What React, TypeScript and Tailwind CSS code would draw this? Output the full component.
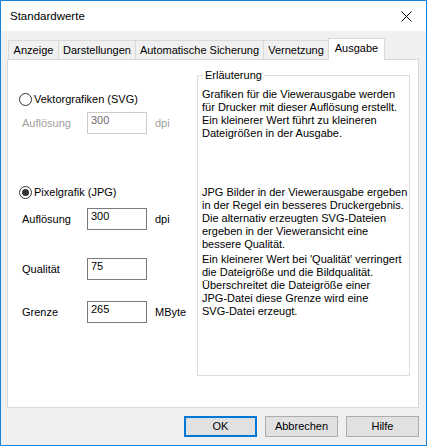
import React from "react";

const font = { fontFamily: '"Liberation Sans", Arial, sans-serif' };

function Radio({ checked }: { checked?: boolean }) {
  return (
    <div className="w-[13px] h-[13px] rounded-full border border-[#333333] bg-white flex items-center justify-center shrink-0">
      {checked && <div className="w-[7px] h-[7px] rounded-full bg-[#333333]" />}
    </div>
  );
}

function Field({
  label,
  value,
  unit,
  disabled,
  className,
}: {
  label: string;
  value: string;
  unit?: string;
  disabled?: boolean;
  className?: string;
}) {
  const txt = disabled ? "text-[#a0a0a0]" : "text-black";
  return (
    <div className={"flex items-center h-[22px] pl-[14px] " + (className || "")}>
      <div className={"w-[65px] leading-[13px] " + txt}>{label}</div>
      <div
        className={
          "w-[60px] h-[22px] border bg-white pl-[3px] pt-[1px] leading-[13px] " +
          (disabled ? "border-[#cccccc] text-[#6d6d6d]" : "border-[#7a7a7a] text-black")
        }
      >
        {value}
      </div>
      {unit && <div className={"ml-[8px] leading-[13px] " + txt}>{unit}</div>}
    </div>
  );
}

const tabs = [
  { label: "Anzeige", w: "w-[50px]" },
  { label: "Darstellungen", w: "w-[77px]" },
  { label: "Automatische Sicherung", w: "w-[128px]" },
  { label: "Vernetzung", w: "w-[65px]" },
];

export default function App() {
  return (
    <div
      className="w-[427px] h-[446px] border border-[#1883d7] bg-[#f0f0f0] flex flex-col text-[11px] text-black"
      style={font}
    >
      {/* Title bar */}
      <div className="h-[30px] bg-white flex items-center justify-between pl-[9px] pr-[10px] shrink-0">
        <span className="text-[11.5px] leading-[14px]">Standardwerte</span>
        <svg width="11" height="11" viewBox="0 0 11 11" className="mr-[4px]">
          <path d="M0.5 0.5 L10.5 10.5 M10.5 0.5 L0.5 10.5" stroke="#000" strokeWidth="1" fill="none" />
        </svg>
      </div>

      {/* Body */}
      <div className="flex-1 flex flex-col pl-[6px] pr-[7px] pt-[7px] pb-[8px]">
        {/* Tabs */}
        <div className="h-[21px] flex items-end pl-[1px] shrink-0">
          {tabs.map((t) => (
            <div
              key={t.label}
              className={
                t.w +
                " h-[19px] border-l border-t border-[#d9d9d9] bg-[#f0f0f0] flex items-center justify-center leading-[13px] whitespace-nowrap"
              }
            >
              {t.label}
            </div>
          ))}
          <div className="w-[57px] h-[22px] mb-[-1px] relative z-10 border-l border-t border-r border-[#d9d9d9] bg-white flex items-center justify-center pb-[2px] leading-[13px]">
            Ausgabe
          </div>
        </div>

        {/* Panel */}
        <div className="h-[349px] border border-[#d9d9d9] bg-white flex shrink-0">
          {/* Left column */}
          <div className="w-[189px] flex flex-col pl-[11px]">
            <div className="flex items-center h-[13px] mt-[33px]">
              <Radio />
              <span className="ml-[2px] leading-[13px]">Vektorgrafiken (SVG)</span>
            </div>
            <Field className="mt-[6px] !pl-[3px]" label="Auflösung" value="300" unit="dpi" disabled />

            <div className="flex items-center h-[13px] mt-[52px]">
              <Radio checked />
              <span className="ml-[2px] leading-[13px]">Pixelgrafik (JPG)</span>
            </div>
            <Field className="mt-[9px] !pl-[3px]" label="Auflösung" value="300" unit="dpi" />
            <Field className="mt-[28px] !pl-[3px]" label="Qualität" value="75" />
            <Field className="mt-[21px] !pl-[3px]" label="Grenze" value="265" unit="MByte" />
          </div>

          {/* Groupbox */}
          <div className="w-[213px] h-[301px] mt-[15px] border border-[#dcdcdc] relative pl-[4px] pt-[12px] leading-[13px]">
            <div className="absolute top-[-7px] left-[5px] bg-white px-[2px] leading-[13px]">Erläuterung</div>
            <div className="whitespace-nowrap">
              <div>Grafiken für die Viewerausgabe werden</div>
              <div>für Drucker mit dieser Auflösung erstellt.</div>
              <div>Ein kleinerer Wert führt zu kleineren</div>
              <div>Dateigrößen in der Ausgabe.</div>
            </div>
            <div className="whitespace-nowrap mt-[46px]">
              <div>JPG Bilder in der Viewerausgabe ergeben</div>
              <div>in der Regel ein besseres Druckergebnis.</div>
              <div>Die alternativ erzeugten SVG-Dateien</div>
              <div>ergeben in der Vieweransicht eine</div>
              <div>bessere Qualität.</div>
            </div>
            <div className="whitespace-nowrap mt-[2px]">
              <div>Ein kleinerer Wert bei 'Qualität' verringert</div>
              <div>die Dateigröße und die Bildqualität.</div>
              <div>Überschreitet die Dateigröße einer</div>
              <div>JPG-Datei diese Grenze wird eine</div>
              <div>SVG-Datei erzeugt.</div>
            </div>
          </div>
        </div>

        {/* Buttons */}
        <div className="mt-[8px] flex justify-end gap-[8px]">
          <button className="w-[73px] h-[21px] border-2 border-[#0078d7] bg-[#e1e1e1] leading-[13px] text-[11px]" style={font}>
            OK
          </button>
          <button className="w-[73px] h-[21px] border border-[#adadad] bg-[#e1e1e1] leading-[13px] text-[11px]" style={font}>
            Abbrechen
          </button>
          <button className="w-[73px] h-[21px] border border-[#adadad] bg-[#e1e1e1] leading-[13px] text-[11px]" style={font}>
            Hilfe
          </button>
        </div>
      </div>
    </div>
  );
}
